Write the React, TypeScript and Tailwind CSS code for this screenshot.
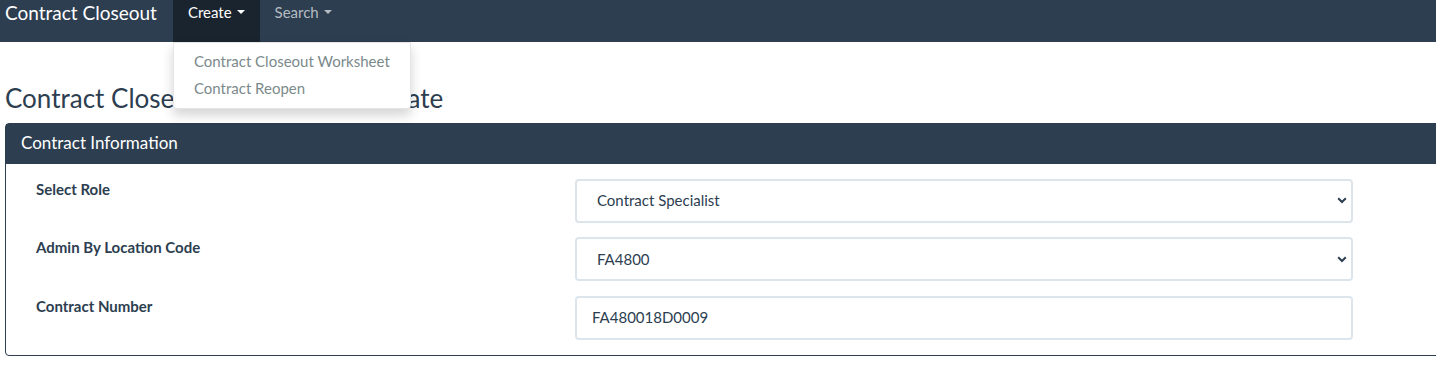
import React from "react";

const fields = [
  { label: "Select Role", value: "Contract Specialist", select: true },
  { label: "Admin By Location Code", value: "FA4800", select: true },
  { label: "Contract Number", value: "FA480018D0009", select: false },
];

function Chevron() {
  return (
    <svg width="10" height="7" viewBox="0 0 10 7" className="text-[#2c3e50]">
      <path d="M1.2 1.2 L5 5 L8.8 1.2" fill="none" stroke="currentColor" strokeWidth="2" />
    </svg>
  );
}

export default function App() {
  return (
    <div className="relative h-[386px] w-[1436px] overflow-hidden bg-white font-['Lato','Noto_Sans',sans-serif] text-[#2c3e50]">
      <nav className="flex h-[42px] items-start bg-[#2c3e50]">
        <div className="pl-[5px] pt-0 text-[19px] leading-[25px] text-white">Contract Closeout</div>
        <div className="relative ml-[16px] flex">
          <div className="flex h-[42px] items-start bg-[#1a242f] px-[15px] pt-[2px] text-[15px] leading-[21px] text-white">
            Create
            <span className="mt-[8px] ml-[5px] inline-block h-0 w-0 border-x-[4px] border-t-[4px] border-x-transparent border-t-white" />
          </div>
          <div className="flex h-[42px] items-start px-[15px] pt-[2px] text-[15px] leading-[21px] text-[#b4bcc2]">
            Search
            <span className="mt-[8px] ml-[5px] inline-block h-0 w-0 border-x-[4px] border-t-[4px] border-x-transparent border-t-[#b4bcc2]" />
          </div>
          <div className="absolute left-0 top-[42px] z-10 w-[238px] rounded-b-[4px] border border-[#e5e5e5] bg-white py-[5px] shadow-[0_6px_12px_rgba(0,0,0,0.175)]">
            <div className="px-[20px] py-[3px] text-[15px] leading-[21.4px] text-[#7b8a8b]">Contract Closeout Worksheet</div>
            <div className="px-[20px] py-[3px] text-[15px] leading-[21.4px] text-[#7b8a8b]">Contract Reopen</div>
          </div>
        </div>
      </nav>

      <div className="pl-[5px]">
        <h3 className="mt-[42px] mb-[10px] text-[26px] leading-[28.6px]">Contract Closeout Worksheet - Create</h3>

        <div className="w-[1460px] rounded-[4px] border border-[#2c3e50]">
          <div className="h-[40px] bg-[#2c3e50] px-[15px] pt-[8px] text-[17px] leading-[21px] text-white">
            Contract Information
          </div>
          <div className="flex flex-col gap-[14.5px] px-[15px] pt-[15px] pb-[15px]">
            {fields.map((f) => (
              <div key={f.label} className="flex items-start">
                <div className="w-[554px] pl-[15px] pt-[1px] text-[15px] font-bold leading-[19px]">
                  {f.label}
                </div>
                <div className="flex h-[44px] w-[778px] items-center justify-between rounded-[4px] border-2 border-[#dce4ec] bg-white text-[15px]">
                  <span className={f.select ? "pl-[20px]" : "pl-[15px]"}>{f.value}</span>
                  {f.select && (
                    <span className="pr-[4px]">
                      <Chevron />
                    </span>
                  )}
                </div>
              </div>
            ))}
          </div>
        </div>
      </div>
    </div>
  );
}
